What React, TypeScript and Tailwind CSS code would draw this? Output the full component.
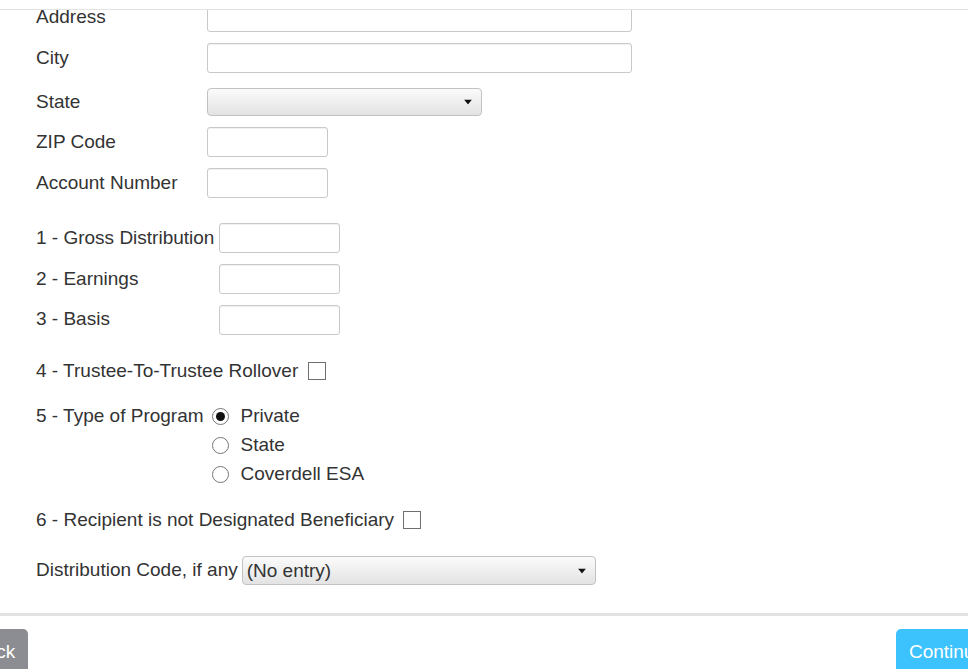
import { ReactNode } from 'react'

const font = { fontFamily: '"Liberation Sans", Arial, sans-serif' }

function TextInput({ width }: { width: string }) {
  return (
    <input
      type="text"
      className={`${width} h-[30px] rounded-[3px] border border-[#c9c9c9] bg-white px-2 text-[19px] text-[#333] shadow-[inset_0_1px_1px_rgba(0,0,0,0.06)] outline-none`}
    />
  )
}

function SelectBox({ width, value, height }: { width: string; value: string; height: string }) {
  return (
    <div
      className={`relative ${width} ${height} rounded-[4px] border border-[#c2c2c2] bg-gradient-to-b from-[#fbfbfb] to-[#e3e3e3]`}
    >
      <div className="flex h-full items-center pl-[4px] text-[19px] leading-none text-[#333]">{value}</div>
      <svg className="absolute right-[9px] top-1/2 -translate-y-1/2" width="8" height="5" viewBox="0 0 8 5">
        <path d="M0 0 H8 L4 5 Z" fill="#111" />
      </svg>
    </div>
  )
}

function Row({ label, labelWidth, className, children }: { label: string; labelWidth: string; className: string; children: ReactNode }) {
  return (
    <div className={`flex items-center ${className}`}>
      <div className={`${labelWidth} shrink-0`}>{label}</div>
      {children}
    </div>
  )
}

function Checkbox() {
  return <span className="inline-block h-[18px] w-[18px] border-[1.5px] border-[#6e6e6e] bg-white" />
}

function Radio({ checked }: { checked?: boolean }) {
  return (
    <span className="flex h-[17px] w-[17px] items-center justify-center rounded-full border border-[#767676] bg-white">
      {checked && <span className="h-[9px] w-[9px] rounded-full bg-[#111]" />}
    </span>
  )
}

const programs = [
  { name: 'Private', checked: true },
  { name: 'State', checked: false },
  { name: 'Coverdell ESA', checked: false },
]

export default function App() {
  return (
    <div className="relative h-[669px] w-full overflow-hidden bg-white text-[19px] text-[#333]" style={font}>
      {/* top bar covering scrolled content */}
      <div className="absolute left-0 right-0 top-0 z-10 h-[10px] border-b border-[#e3e3e3] bg-white" />

      <div className="pl-[36px] pt-[2px]">
        <Row label="Address" labelWidth="w-[171px]" className="h-[30px]">
          <TextInput width="w-[425px]" />
        </Row>
        <Row label="City" labelWidth="w-[171px]" className="mt-[11px] h-[30px]">
          <TextInput width="w-[425px]" />
        </Row>
        <Row label="State" labelWidth="w-[171px]" className="mt-[15px] h-[28px]">
          <SelectBox width="w-[275px]" height="h-[28px]" value="" />
        </Row>
        <Row label="ZIP Code" labelWidth="w-[171px]" className="mt-[11px] h-[30px]">
          <TextInput width="w-[121px]" />
        </Row>
        <Row label="Account Number" labelWidth="w-[171px]" className="mt-[11px] h-[30px]">
          <TextInput width="w-[121px]" />
        </Row>

        <Row label="1 - Gross Distribution" labelWidth="w-[183px]" className="mt-[25px] h-[30px]">
          <TextInput width="w-[121px]" />
        </Row>
        <Row label="2 - Earnings" labelWidth="w-[183px]" className="mt-[11px] h-[30px]">
          <TextInput width="w-[121px]" />
        </Row>
        <Row label="3 - Basis" labelWidth="w-[183px]" className="mt-[11px] h-[29px]">
          <TextInput width="w-[121px]" />
        </Row>

        <div className="mt-[22px] flex h-[30px] items-center gap-[10px]">
          <span>4 - Trustee-To-Trustee Rollover</span>
          <Checkbox />
        </div>

        <div className="mt-[16px] flex gap-[8px]">
          <div className="flex h-[29px] items-center">5 - Type of Program</div>
          <div className="flex flex-col">
            {programs.map((p) => (
              <label key={p.name} className="flex h-[29px] items-center gap-[12px]">
                <Radio checked={p.checked} />
                <span>{p.name}</span>
              </label>
            ))}
          </div>
        </div>

        <div className="mt-[16px] flex h-[30px] items-center gap-[9px]">
          <span>6 - Recipient is not Designated Beneficiary</span>
          <Checkbox />
        </div>

        <div className="mt-[21px] flex h-[29px] items-center gap-[4px]">
          <span>Distribution Code, if any</span>
          <SelectBox width="w-[354px]" height="h-[29px]" value="(No entry)" />
        </div>
      </div>

      {/* Footer */}
      <div className="mt-[28px] border-t-[3px] border-[#e2e2e2] pt-[13px]">
        <div className="flex justify-between">
          <button className="-ml-[40px] h-[46px] rounded-[5px] bg-[#8b8d92] px-[13px] text-[19px] text-white">
            Back
          </button>
          <button className="-mr-[30px] h-[46px] rounded-[5px] bg-[#3cc2fd] px-[13px] text-[19px] text-white">
            Continue
          </button>
        </div>
      </div>
    </div>
  )
}
